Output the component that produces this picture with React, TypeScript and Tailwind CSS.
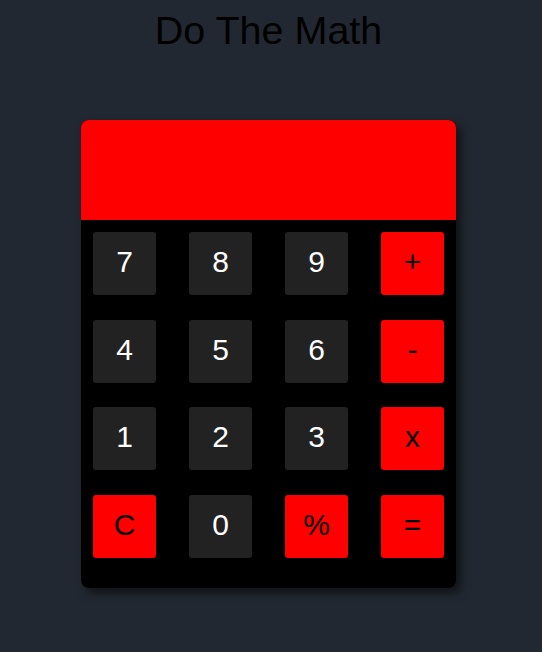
import React from "react";

const keys = [
  { label: "7", op: false },
  { label: "8", op: false },
  { label: "9", op: false },
  { label: "+", op: true },
  { label: "4", op: false },
  { label: "5", op: false },
  { label: "6", op: false },
  { label: "-", op: true },
  { label: "1", op: false },
  { label: "2", op: false },
  { label: "3", op: false },
  { label: "x", op: true },
  { label: "C", op: true },
  { label: "0", op: false },
  { label: "%", op: true },
  { label: "=", op: true },
];

const App = () => {
  return (
    <div className="min-h-[652px] w-full bg-[#222831] font-['Liberation_Sans',Arial,sans-serif]">
      <div className="flex w-[537px] flex-col items-center pt-2">
        <h1 className="text-[39.5px] leading-[44px] text-black">Do The Math</h1>
        <div className="mt-[68px] w-[375px] overflow-hidden rounded-[8px] bg-black shadow-[5px_5px_10px_rgba(0,0,0,0.55)]">
          <div className="h-[100px] bg-[#ff0000]" />
          <div className="grid grid-cols-[repeat(4,63px)] justify-between gap-y-[24.6px] px-3 pb-[30px] pt-3">
            {keys.map((k) => (
              <button
                key={k.label}
                className={
                  k.op
                    ? "flex h-[63px] w-[63px] items-center justify-center rounded-[3px] bg-[#ff0000] pb-1 text-[30px] text-black"
                    : "flex h-[63px] w-[63px] items-center justify-center rounded-[3px] bg-[#222222] pb-1 text-[30px] text-white"
                }
              >
                {k.label}
              </button>
            ))}
          </div>
        </div>
      </div>
    </div>
  );
};

export default App;
